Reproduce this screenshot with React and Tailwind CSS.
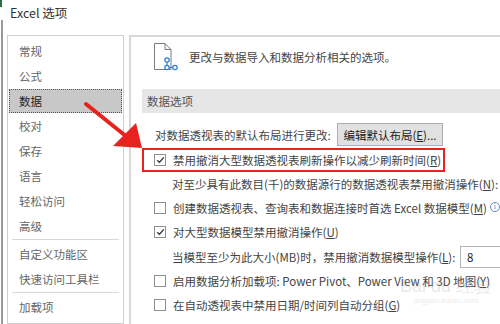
import React from "react";

function Check({ checked }) {
    return (
        <span className="w-[12px] h-[12px] border border-[#8f8f8f] bg-white flex items-center justify-center shrink-0">
            {checked && (
                <svg width="9" height="8" viewBox="0 0 9 8">
                    <path d="M1.2 4.2 L3.5 6.3 L7.8 1.4" fill="none" stroke="#333" strokeWidth="1.3" />
                </svg>
            )}
        </span>
    );
}

function NavItem({ label, active }) {
    if (active) {
        return (
            <div className="h-[25px] flex items-center">
                <div className="mx-[1px] h-[24px] flex-1 flex items-center pl-[9px] bg-[#c8c8c8] border border-dotted border-[#555] text-[#262626]">
                    {label}
                </div>
            </div>
        );
    }
    return <div className="h-[25px] flex items-center pl-[11px] text-[#666]">{label}</div>;
}

function Sep() {
    return <div className="mx-[4px] my-[1px] h-[1px] bg-[#d9d9d9]" />;
}

function DocIcon() {
    return (
        <svg width="28" height="30" viewBox="0 0 28 30">
            <path d="M1.5 1.5 H12 L18 7.5 V27.5 H1.5 Z" fill="white" stroke="#7a7a7a" strokeWidth="1" />
            <path d="M12 1.5 V7.5 H18" fill="none" stroke="#7a7a7a" strokeWidth="1" />
            <path d="M14 19 V25.5 H20" fill="none" stroke="#2b7cd3" strokeWidth="1.2" />
            <circle cx="14" cy="18" r="2.2" fill="white" stroke="#2b7cd3" strokeWidth="1.2" />
            <circle cx="14" cy="25.5" r="2.2" fill="white" stroke="#2b7cd3" strokeWidth="1.2" />
            <circle cx="22" cy="25.5" r="2.2" fill="white" stroke="#2b7cd3" strokeWidth="1.2" />
        </svg>
    );
}

export default function App() {
    return (
        <div className="w-[500px] h-[324px] bg-white overflow-hidden relative flex font-['Noto_Sans_CJK_SC',sans-serif] text-[11.5px] leading-[16px] text-[#444]">
            {/* sliver of the workbook behind the dialog */}
            <div className="w-[7px] shrink-0 flex flex-col">
                <div className="h-[7px] w-[2px] bg-[#217346]" />
                <div className="h-[13px]" />
                <div className="flex-1 w-[2px] bg-[#9a9a9a] ml-[1px]" />
            </div>

            <div className="flex-1 min-w-0 flex flex-col">
                <div className="h-[35px] shrink-0 pt-[5px] pl-[3px] text-[12.5px] text-[#333]">Excel 选项</div>

                <div className="flex flex-1 min-h-0 gap-[5px]">
                    <div className="w-[117px] shrink-0 border border-[#cfcfcf] pt-[2px] flex flex-col">
                        <NavItem label="常规" />
                        <NavItem label="公式" />
                        <NavItem label="数据" active />
                        <NavItem label="校对" />
                        <NavItem label="保存" />
                        <NavItem label="语言" />
                        <NavItem label="轻松访问" />
                        <NavItem label="高级" />
                        <Sep />
                        <NavItem label="自定义功能区" />
                        <NavItem label="快速访问工具栏" />
                        <Sep />
                        <NavItem label="加载项" />
                    </div>

                    <div className="flex-1 min-w-0 border-l-2 border-t-2 border-[#d8d8d8] flex flex-col">
                        <div className="h-[52px] shrink-0 pt-[5px] pl-[22px] flex items-start">
                            <div className="flex items-center gap-[8px]">
                                <DocIcon />
                                <span>更改与数据导入和数据分析相关的选项。</span>
                            </div>
                        </div>

                        <div className="ml-[11px] h-[24px] shrink-0 bg-[#e6e6e6] pl-[5px] flex items-center text-[#555]">数据选项</div>

                        <div className="ml-[11px] mt-[10px] h-[23px] shrink-0 pl-[13px] flex items-center">
                            <span className="w-[182px] shrink-0">对数据透视表的默认布局进行更改:</span>
                            <span className="w-[106px] h-[23px] shrink-0 bg-[#e1e1e1] border border-[#adadad] flex items-center justify-center text-[#222]">
                                编辑默认布局(<u>E</u>)...
                            </span>
                        </div>

                        <div className="ml-[11px] mt-[2px] w-[303px] h-[24px] shrink-0 border-2 border-[#e8231f] pl-[10px] flex items-center gap-[7px]">
                            <Check checked />
                            <span>禁用撤消大型数据透视表刷新操作以减少刷新时间(<u>R</u>)</span>
                        </div>

                        <div className="ml-[11px] h-[24px] shrink-0 pl-[30px] flex items-center whitespace-nowrap">
                            对至少具有此数目(千)的数据源行的数据透视表禁用撤消操作(<u>N</u>):
                        </div>

                        <div className="ml-[11px] h-[24px] shrink-0 pl-[12px] flex items-center gap-[7px] whitespace-nowrap">
                            <Check />
                            <span>创建数据透视表、查询表和数据连接时首选 Excel 数据模型(<u>M</u>)</span>
                            <span className="w-[10px] h-[10px] rounded-full border border-[#5a8fc8] text-[#5a8fc8] text-[8px] leading-[8px] flex items-center justify-center font-['Liberation_Serif',serif] shrink-0 -mt-[3px] -ml-[4px]">
                                i
                            </span>
                        </div>

                        <div className="ml-[11px] h-[23px] shrink-0 pl-[12px] flex items-center gap-[7px]">
                            <Check checked />
                            <span>对大型数据模型禁用撤消操作(<u>U</u>)</span>
                        </div>

                        <div className="ml-[11px] mt-[1px] h-[25px] shrink-0 pl-[30px] flex items-center whitespace-nowrap">
                            <span className="w-[288px] shrink-0">当模型至少为此大小(MB)时，禁用撤消数据模型操作(<u>L</u>):</span>
                            <span className="w-[60px] h-[22px] shrink-0 border border-[#b4b4b4] pl-[6px] flex items-center text-[#222]">8</span>
                        </div>

                        <div className="ml-[11px] h-[24px] shrink-0 pl-[12px] flex items-center gap-[7px] whitespace-nowrap">
                            <Check />
                            <span>启用数据分析加载项: Power Pivot、Power View 和 3D 地图(<u>Y</u>)</span>
                        </div>

                        <div className="ml-[11px] h-[24px] shrink-0 pl-[12px] flex items-center gap-[7px]">
                            <Check />
                            <span>在自动透视表中禁用日期/时间列自动分组(<u>G</u>)</span>
                        </div>
                    </div>
                </div>
            </div>

            {/* baidu watermark */}
            <div className="absolute left-[400px] top-[276px] flex flex-col items-center text-[rgba(160,160,160,0.25)] pointer-events-none">
                <span className="text-[18px] leading-[20px] font-['Liberation_Sans',sans-serif]">Bai du 经验</span>
                <span className="text-[8px] leading-[10px] font-['Liberation_Sans',sans-serif]">jingyan.baidu.com</span>
            </div>

            {/* red annotation arrow */}
            <svg className="absolute left-0 top-0 pointer-events-none" width="500" height="324" viewBox="0 0 500 324">
                <line x1="86" y1="104" x2="127" y2="137" stroke="#e8231f" strokeWidth="4" strokeLinecap="round" />
                <polygon points="142,148 113,146 136,123" fill="#e8231f" />
            </svg>
        </div>
    );
}
